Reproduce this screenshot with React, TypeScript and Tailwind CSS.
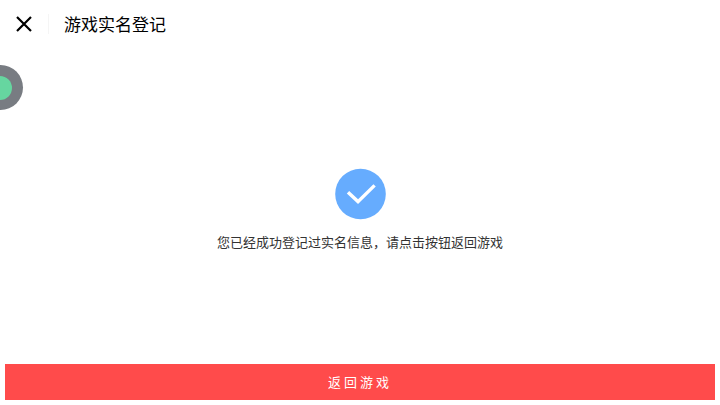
const CloseIcon = () => (
  <svg width="16" height="16" viewBox="0 0 16 16" fill="none" stroke="#000000" strokeWidth="2.2" aria-hidden="true">
    <path d="M1 1 15 15M15 1 1 15" />
  </svg>
);

const SuccessIcon = () => (
  <svg width="52" height="52" viewBox="0 0 52 52" fill="none" aria-hidden="true">
    <circle cx="26.5" cy="26" r="25.3" fill="#66acfe" />
    <path d="M14 24.2 24 33.6 40.6 17.4" stroke="#ffffff" strokeWidth="3.4" />
  </svg>
);

// 悬浮球，半边贴在屏幕左侧
const FloatingBall = () => (
  <button
    type="button"
    aria-label="悬浮球"
    className="absolute top-[65px] left-0 flex h-[45px] w-[23px] items-center rounded-r-full bg-[#787c82]"
  >
    <span className="h-6 w-3 rounded-r-full bg-[#66d6a0]" />
  </button>
);

export default function App() {
  return (
    <div className="relative flex min-h-screen flex-col bg-white font-['Noto_Sans_CJK_SC',sans-serif]">
      <header className="flex h-12 items-center">
        <button type="button" aria-label="关闭" className="flex h-12 w-12 items-center justify-center">
          <CloseIcon />
        </button>
        <span className="h-5 w-px bg-[#f5f5f5]" />
        <h1 className="ml-[15px] text-[17px] leading-6 text-black">游戏实名登记</h1>
      </header>

      <FloatingBall />

      <main className="flex flex-1 flex-col items-center justify-center gap-3 px-4 pt-3">
        <SuccessIcon />
        <p className="text-center text-[13px] leading-5 text-[#333333]">
          您已经成功登记过实名信息，请点击按钮返回游戏
        </p>
      </main>

      <footer className="p-[5px]">
        <button
          type="button"
          className="h-9 w-full bg-[#ff4b4b] text-[13px] leading-5 tracking-[3px] text-white"
        >
          返回游戏
        </button>
      </footer>
    </div>
  );
}
